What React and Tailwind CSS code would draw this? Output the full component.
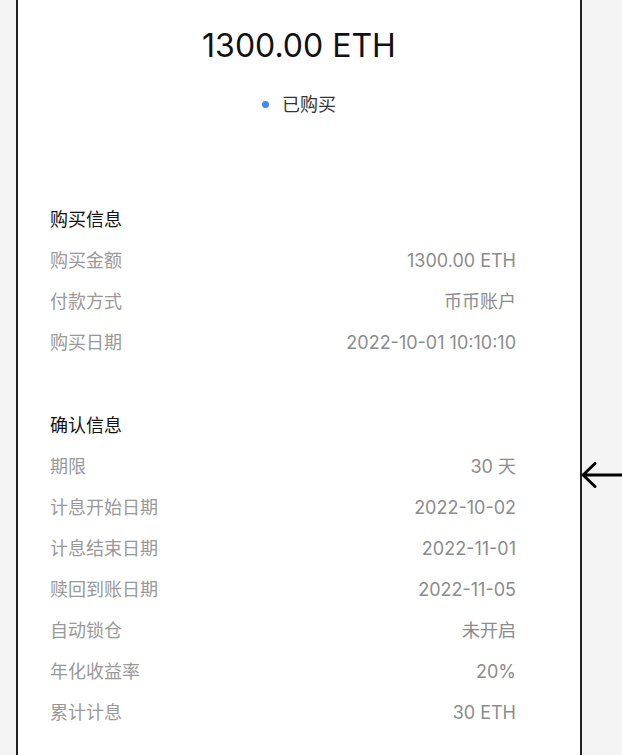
import React from 'react';

const font = { fontFamily: 'Inter, "Noto Sans CJK SC", sans-serif' };

const buyInfo = [
  ['购买金额', '1300.00 ETH'],
  ['付款方式', '币币账户'],
  ['购买日期', '2022-10-01 10:10:10'],
];

const confirmInfo = [
  ['期限', '30 天'],
  ['计息开始日期', '2022-10-02'],
  ['计息结束日期', '2022-11-01'],
  ['赎回到账日期', '2022-11-05'],
  ['自动锁仓', '未开启'],
  ['年化收益率', '20%'],
  ['累计计息', '30 ETH'],
];

const Section = ({ title, rows }) => (
  <div className="flex flex-col">
    <div className="h-[41px] flex items-center text-[18px] text-[#111]">{title}</div>
    {rows.map(([k, v]) => (
      <div key={k} className="h-[41px] flex items-center justify-between text-[18px] text-[#999]">
        <span>{k}</span>
        <span className="text-[#8c8c8c]">{v}</span>
      </div>
    ))}
  </div>
);

export default function App() {
  return (
    <div className="min-h-screen h-[755px] overflow-hidden bg-[#f4f4f4] flex" style={font}>
      <div className="ml-[16px] w-[566px] shrink-0 bg-white border-x-2 border-[#222] flex flex-col">
        <div className="pt-[26px] h-[72px] flex justify-center">
          <span className="text-[32px] leading-[40px] text-[#111]">1300.00 ETH</span>
        </div>
        <div className="mt-[19px] flex items-center justify-center gap-[13px] text-[18px] text-[#333]">
          <span className="w-[7px] h-[7px] rounded-full bg-[#3b8cf7]" />
          <span>已购买</span>
        </div>
        <div className="mt-[81px] pl-[32px] pr-[64px] flex flex-col gap-[42px]">
          <Section title="购买信息" rows={buyInfo} />
          <Section title="确认信息" rows={confirmInfo} />
        </div>
      </div>
      <div className="flex-1 pt-[462px]">
        <svg width="42" height="26" viewBox="0 0 42 26" className="-ml-[1px]">
          <path d="M2 13 H42 M14 1.5 L2 13 L14 24.5" fill="none" stroke="#000" strokeWidth="3" strokeLinecap="round" strokeLinejoin="round" />
        </svg>
      </div>
    </div>
  );
}
